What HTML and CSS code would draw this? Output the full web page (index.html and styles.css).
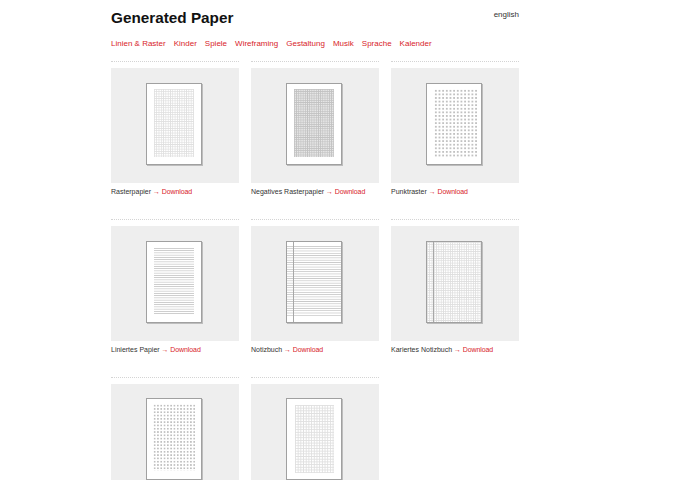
FILE: index.html
```html
<!DOCTYPE html>
<html lang="de">
<head>
<meta charset="utf-8">
<title>Generated Paper</title>
<link rel="stylesheet" href="styles.css">
</head>
<body>
<div class="page">
  <header class="head">
    <h1 class="title">Generated Paper</h1>
    <a class="lang" href="#">english</a>
  </header>
  <nav class="nav">
    <a href="#">Linien &amp; Raster</a>
    <a href="#">Kinder</a>
    <a href="#">Spiele</a>
    <a href="#">Wireframing</a>
    <a href="#">Gestaltung</a>
    <a href="#">Musik</a>
    <a href="#">Sprache</a>
    <a href="#">Kalender</a>
  </nav>
  <div class="grid">
    <div class="card">
      <div class="thumb"><div class="paper"><div class="pat grid-light"></div></div></div>
      <p class="cap">Rasterpapier <a href="#">→ Download</a></p>
    </div>
    <div class="card">
      <div class="thumb"><div class="paper"><div class="pat grid-dark"></div></div></div>
      <p class="cap">Negatives Rasterpapier <a href="#">→ Download</a></p>
    </div>
    <div class="card">
      <div class="thumb"><div class="paper"><div class="pat dots"></div></div></div>
      <p class="cap">Punktraster <a href="#">→ Download</a></p>
    </div>
    <div class="card">
      <div class="thumb"><div class="paper"><div class="pat lines"></div></div></div>
      <p class="cap">Liniertes Papier <a href="#">→ Download</a></p>
    </div>
    <div class="card">
      <div class="thumb"><div class="paper"><div class="pat note-lines"></div><div class="margin-line"></div></div></div>
      <p class="cap">Notizbuch <a href="#">→ Download</a></p>
    </div>
    <div class="card">
      <div class="thumb"><div class="paper"><div class="pat note-grid"></div><div class="margin-line"></div></div></div>
      <p class="cap">Kariertes Notizbuch <a href="#">→ Download</a></p>
    </div>
    <div class="card short">
      <div class="thumb"><div class="paper"><div class="pat dots-fine"></div></div></div>
    </div>
    <div class="card short">
      <div class="thumb"><div class="paper"><div class="pat grid-wide"></div></div></div>
    </div>
  </div>
</div>
</body>
</html>
```

FILE: styles.css
```css
html, body {
  margin: 0;
  padding: 0;
  background: #fff;
}
body {
  font-family: "Liberation Sans", Arial, sans-serif;
  color: #222;
}
a {
  text-decoration: none;
  color: #d8232a;
}
.page {
  width: 408px;
  margin-left: 111px;
  padding-top: 9px;
}
.head {
  display: flex;
  justify-content: space-between;
  align-items: flex-start;
}
.title {
  margin: 0;
  font-size: 15.3px;
  line-height: 18px;
  font-weight: bold;
  color: #111;
}
.lang {
  color: #333;
  font-size: 8px;
  line-height: 12px;
}
.nav {
  display: flex;
  gap: 8px;
  margin-top: 11px;
  font-size: 8px;
  line-height: 12px;
}
.grid {
  margin-top: 11px;
  display: grid;
  grid-template-columns: repeat(3, 128px);
  column-gap: 12px;
}
.card {
  border-top: 1px dotted #d4d4d4;
  padding-top: 6px;
  height: 151px;
}
.card.short {
  height: 96px;
}
.thumb {
  height: 115px;
  background: #eeeeee;
  display: flex;
  justify-content: center;
  align-items: center;
  padding-bottom: 4px;
  box-sizing: border-box;
}
.short .thumb {
  height: 96px;
  align-items: flex-start;
  padding-top: 14px;
  padding-bottom: 0;
}
.paper {
  position: relative;
  width: 54px;
  height: 80px;
  background: #fff;
  border: 1px solid #a0a0a0;
  box-shadow: 1px 1px 0 #bdbdbd;
  margin-right: 2px;
}
.pat {
  position: absolute;
  left: 7px;
  right: 7px;
  top: 5px;
  bottom: 7px;
}
.grid-light {
  background-image:
    linear-gradient(to right, #e0e0e0 1px, transparent 1px),
    linear-gradient(to bottom, #e0e0e0 1px, transparent 1px);
  background-size: 2.3px 2.3px;
}
.grid-dark {
  background-image:
    linear-gradient(to right, #c2c2c2 1px, transparent 1px),
    linear-gradient(to bottom, #c2c2c2 1px, transparent 1px);
  background-size: 2.2px 2.2px;
  background-color: #e6e6e6;
}
.dots {
  left: 7px;
  right: 4px;
  top: 5px;
  bottom: 6px;
  background-image: radial-gradient(circle, #8a8a8a 0.5px, transparent 0.8px);
  background-size: 3.67px 3.6px;
}
.dots-fine {
  left: 6px;
  right: 5px;
  top: 5px;
  bottom: 8px;
  background-image: radial-gradient(circle, #a8a8a8 0.5px, transparent 0.8px);
  background-size: 3.3px 3.3px;
}
.lines {
  top: 6px;
  bottom: 8px;
  background-image: linear-gradient(to bottom, #c4c4c4 1px, transparent 1px);
  background-size: 100% 2.25px;
}
.note-lines {
  left: 0;
  right: 0;
  top: 4px;
  bottom: 6px;
  background-image: linear-gradient(to bottom, #c8c8c8 1px, transparent 1px);
  background-size: 100% 2.3px;
}
.note-grid {
  left: 0;
  right: 0;
  top: 0;
  bottom: 0;
  background-image:
    linear-gradient(to right, #dedede 1px, transparent 1px),
    linear-gradient(to bottom, #dedede 1px, transparent 1px);
  background-size: 2.3px 2.3px;
}
.grid-wide {
  left: 8px;
  right: 7px;
  top: 6px;
  bottom: 6px;
  background-image:
    linear-gradient(to right, #e0e0e0 1px, transparent 1px),
    linear-gradient(to bottom, #e0e0e0 1px, transparent 1px);
  background-size: 2.7px 2.7px;
}
.margin-line {
  position: absolute;
  left: 6px;
  top: 0;
  bottom: 0;
  width: 1px;
  border-left: 1px solid #a8a8a8;
}
.cap {
  margin: 4px 0 0;
  font-size: 7px;
  line-height: 10px;
  color: #333;
  white-space: nowrap;
}
.cap a {
  letter-spacing: -0.1px;
}
```
